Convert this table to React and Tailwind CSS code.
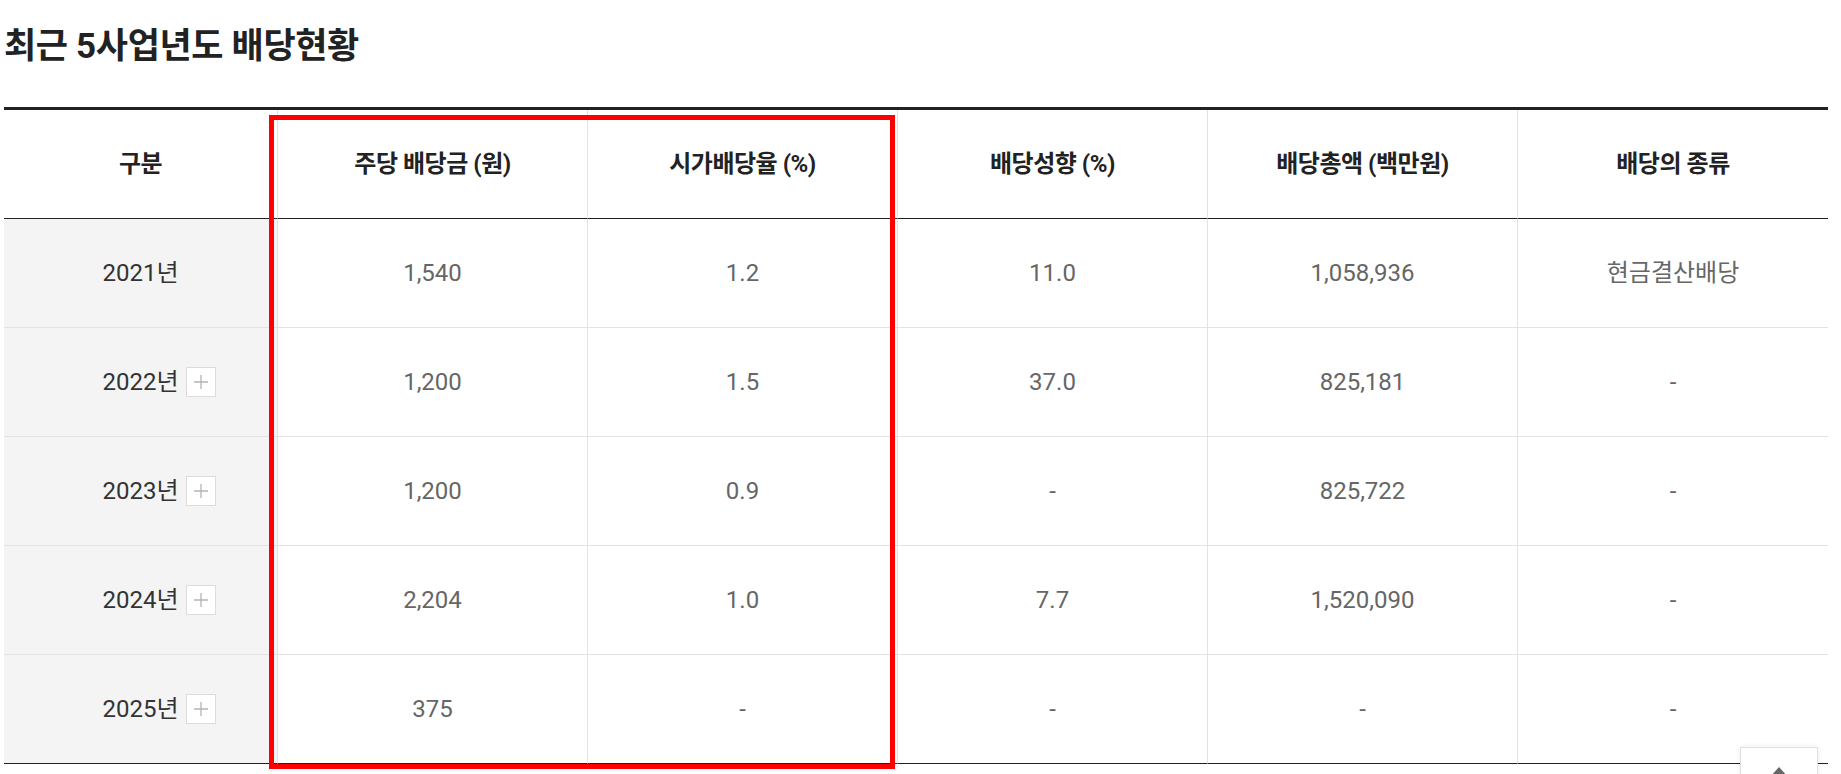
import React from 'react';

const HEADERS = ['구분', '주당 배당금 (원)', '시가배당율 (%)', '배당성향 (%)', '배당총액 (백만원)', '배당의 종류'];

const ROWS = [
  { year: '2021년', more: false, values: ['1,540', '1.2', '11.0', '1,058,936', '현금결산배당'] },
  { year: '2022년', more: true, values: ['1,200', '1.5', '37.0', '825,181', '-'] },
  { year: '2023년', more: true, values: ['1,200', '0.9', '-', '825,722', '-'] },
  { year: '2024년', more: true, values: ['2,204', '1.0', '7.7', '1,520,090', '-'] },
  { year: '2025년', more: true, values: ['375', '-', '-', '-', '-'] },
];

const FONT = { fontFamily: 'Roboto, "Noto Sans CJK KR", sans-serif' };

function PlusButton() {
  return (
    <span className="absolute left-full top-1/2 ml-[7px] flex h-[30px] w-[30px] -translate-y-1/2 items-center justify-center border border-[#dcdcdc] bg-white">
      <svg width="16" height="16" viewBox="0 0 16 16">
        <path d="M8 1v14M1 8h14" stroke="#b4b4b4" strokeWidth="1.3" />
      </svg>
    </span>
  );
}

export default function App() {
  return (
    <div className="relative h-[774px] overflow-hidden bg-white" style={FONT}>
      {/* Title */}
      <div className="h-[107px] pl-[4px] pt-[27px]">
        <h2 className="text-[35px] font-bold leading-[40px] tracking-[-0.01em] text-[#222]">
          최근 5사업년도 배당현황
        </h2>
      </div>

      {/* Table */}
      <div className="ml-[4px] w-[1824px] border-t-[3px] border-[#222]">
        <div className="grid grid-cols-[274px_310px_310px_310px_310px_310px]">
          {HEADERS.map((h, i) => (
            <div
              key={h}
              className={`flex h-[109px] items-center justify-center border-b border-b-[#222] text-[24px] font-bold tracking-[-0.02em] text-[#222] ${
                i < 5 ? 'border-r border-r-[#e3e3e3]' : ''
              }`}
            >
              {h}
            </div>
          ))}

          {ROWS.map((row, r) => {
            const last = r === ROWS.length - 1;
            const rowBorder = last ? 'border-b-[#222]' : 'border-b-[#e3e3e3]';
            return (
              <React.Fragment key={row.year}>
                <div
                  className={`flex h-[109px] items-center justify-center border-b border-r border-r-[#e3e3e3] bg-[#f4f4f4] text-[24px] text-[#333] ${rowBorder}`}
                >
                  <span className="relative">
                    {row.year}
                    {row.more && <PlusButton />}
                  </span>
                </div>
                {row.values.map((v, i) => (
                  <div
                    key={i}
                    className={`flex h-[109px] items-center justify-center border-b text-[24px] text-[#666] ${rowBorder} ${
                      i < 4 ? 'border-r border-r-[#e3e3e3]' : ''
                    }`}
                  >
                    {v}
                  </div>
                ))}
              </React.Fragment>
            );
          })}
        </div>
      </div>

      {/* Highlight box */}
      <div className="pointer-events-none absolute left-[269px] top-[115px] h-[654px] w-[626px] border-[5px] border-[#ff0000]" />

      {/* Scroll to top */}
      <button className="absolute left-[1740px] top-[747px] flex h-[78px] w-[78px] justify-center border border-[#e0e0e0] bg-white pt-[18px] shadow-[0_0_6px_rgba(0,0,0,0.08)]">
        <svg width="20" height="12" viewBox="0 0 20 12">
          <path d="M10 1L19 11H1z" fill="#666" />
        </svg>
      </button>
    </div>
  );
}
